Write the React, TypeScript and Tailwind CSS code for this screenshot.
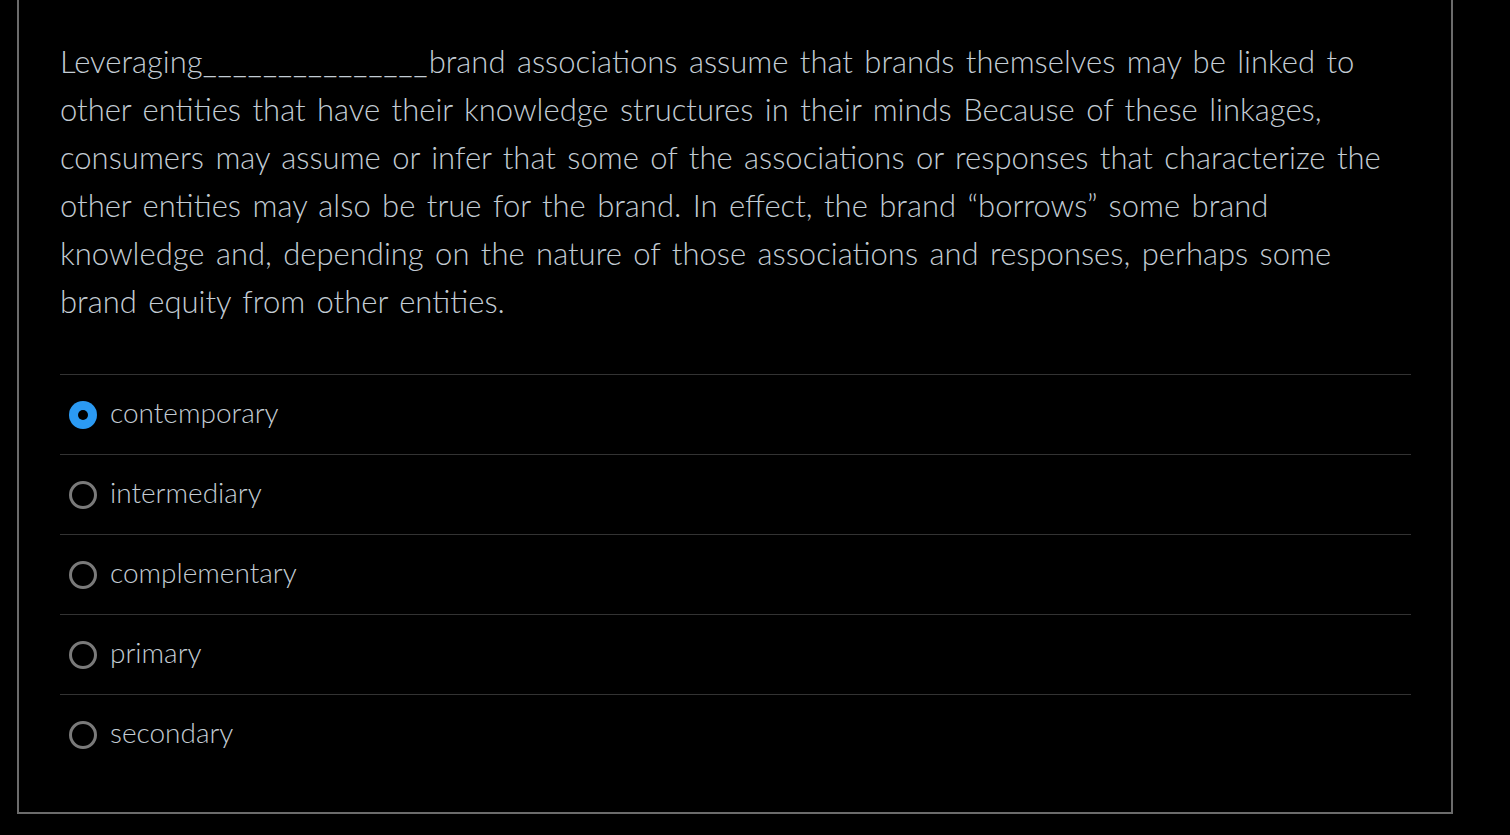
import React from "react";

const options = ["contemporary", "intermediary", "complementary", "primary", "secondary"];

function Radio({ checked }: { checked: boolean }) {
  return (
    <svg width="30" height="30" viewBox="0 0 30 30" className="shrink-0">
      {checked ? (
        <>
          <circle cx="15" cy="15" r="14" fill="#2b9af3" />
          <circle cx="15" cy="15" r="5" fill="#000" />
        </>
      ) : (
        <circle cx="15" cy="15" r="12.5" fill="none" stroke="#7a7a7a" strokeWidth="3" />
      )}
    </svg>
  );
}

export default function App() {
  return (
    <div
      className="w-[1510px] h-[835px] bg-black overflow-hidden"
      style={{ fontFamily: "'Lato Light', Lato, 'Open Sans', sans-serif" }}
    >
      <div className="ml-[17px] w-[1436px] h-[814px] border-2 border-t-0 border-[#6b6b6b] pl-[41px] pr-[40px] pt-[37px]">
        <p className="text-[31px] leading-[48px] font-light text-[#c3ccd4] [word-spacing:3px]">
          Leveraging<span className="tracking-[1.1px]">{"_".repeat(15)}</span>brand associations assume that brands themselves may be linked to other entities that have their knowledge structures in their minds Because of these linkages, consumers may assume or infer that some of the associations or responses that characterize the other entities may also be true for the brand. In effect, the brand “borrows” some brand knowledge and, depending on the nature of those associations and responses, perhaps some brand equity from other entities.
        </p>
        <div className="mt-[49px]">
          {options.map((o, i) => (
            <div key={o} className="h-[80px] border-t border-[#333333] flex items-center pl-[8px] gap-[12px]">
              <Radio checked={i === 0} />
              <span className="text-[28px] font-light text-[#c3ccd4] leading-none -mt-[6px]">{o}</span>
            </div>
          ))}
        </div>
      </div>
    </div>
  );
}
